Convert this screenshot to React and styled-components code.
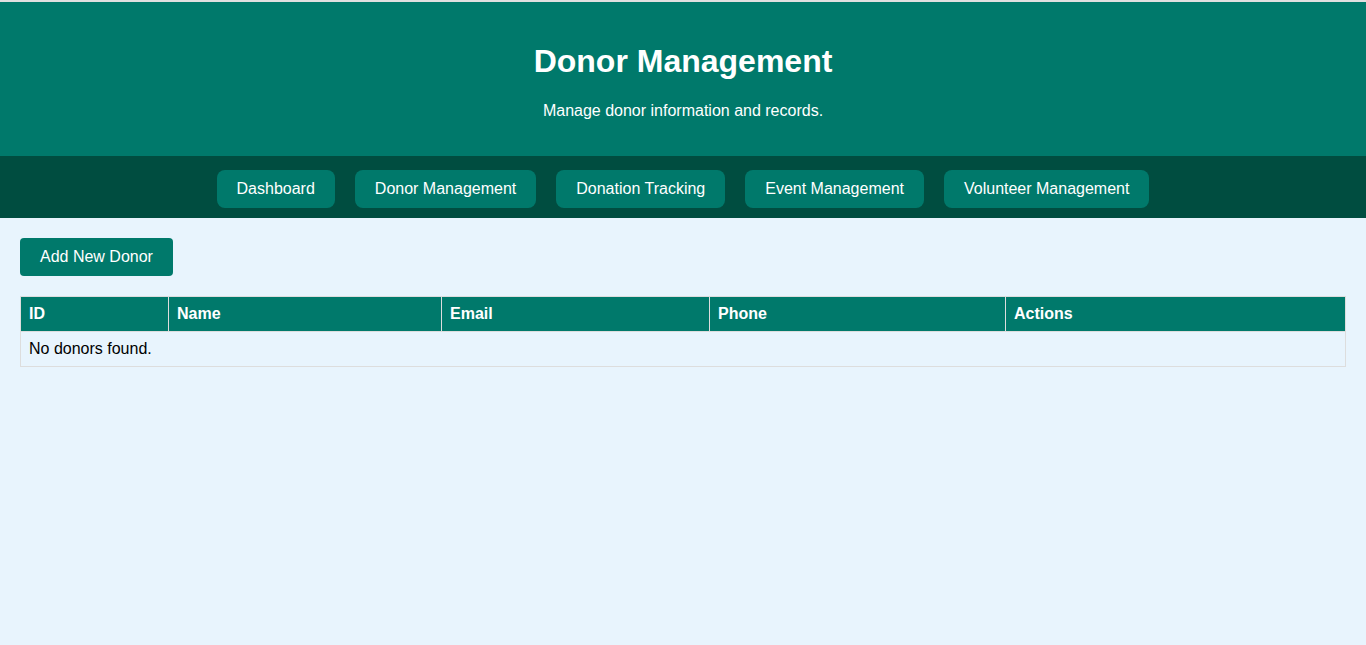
import React from "react";
import styled, { createGlobalStyle } from "styled-components";

const GlobalStyle = createGlobalStyle`
  html, body {
    margin: 0;
    padding: 0;
    background-color: #e8f4fd;
    font-family: "Liberation Sans", Arial, sans-serif;
  }
`;

const Header = styled.header`
  background-color: #00796b;
  color: #fff;
  text-align: center;
  padding: 20px;
  border-top: 2px solid #e0e0e0;
`;

const Title = styled.h1`
  font-size: 32px;
  font-weight: bold;
  margin: 21px 0 22px;
`;

const Subtitle = styled.p`
  font-size: 16px;
  margin: 16px 0;
`;

const Nav = styled.nav`
  background-color: #004d40;
  display: flex;
  justify-content: center;
  gap: 20px;
  padding: 14px 0 10px;
`;

const NavButton = styled.a`
  background-color: #00796b;
  color: #fff;
  font-size: 16px;
  line-height: 18px;
  padding: 10px 20px;
  border-radius: 8px;
  text-decoration: none;
  cursor: pointer;
`;

const Main = styled.main`
  padding: 20px;
`;

const PrimaryButton = styled.button`
  background-color: #00796b;
  color: #fff;
  border: none;
  font-family: inherit;
  font-size: 16px;
  line-height: 18px;
  padding: 10px 20px;
  border-radius: 4px;
  cursor: pointer;
`;

const Table = styled.table`
  width: 100%;
  margin-top: 20px;
  border-collapse: collapse;
  table-layout: fixed;
  font-size: 16px;
`;

const Th = styled.th`
  box-sizing: border-box;
  background-color: #00796b;
  color: #fff;
  text-align: left;
  padding: 8px;
  line-height: 18px;
  border: 1px solid #ddd;
  width: ${(p) => p.$w}px;
`;

const Td = styled.td`
  padding: 8px;
  line-height: 18px;
  border: 1px solid #ddd;
  color: #000;
`;

const columns = [
  { label: "ID", width: 148 },
  { label: "Name", width: 273 },
  { label: "Email", width: 268 },
  { label: "Phone", width: 296 },
  { label: "Actions", width: 340 },
];

const navItems = [
  "Dashboard",
  "Donor Management",
  "Donation Tracking",
  "Event Management",
  "Volunteer Management",
];

const App = () => {
  const donors = [];

  return (
    <>
      <GlobalStyle />
      <Header>
        <Title>Donor Management</Title>
        <Subtitle>Manage donor information and records.</Subtitle>
      </Header>
      <Nav>
        {navItems.map((item) => (
          <NavButton key={item}>{item}</NavButton>
        ))}
      </Nav>
      <Main>
        <PrimaryButton>Add New Donor</PrimaryButton>
        <Table>
          <thead>
            <tr>
              {columns.map((col) => (
                <Th key={col.label} $w={col.width}>
                  {col.label}
                </Th>
              ))}
            </tr>
          </thead>
          <tbody>
            {donors.length === 0 ? (
              <tr>
                <Td colSpan={columns.length}>No donors found.</Td>
              </tr>
            ) : null}
          </tbody>
        </Table>
      </Main>
    </>
  );
};

export default App;
